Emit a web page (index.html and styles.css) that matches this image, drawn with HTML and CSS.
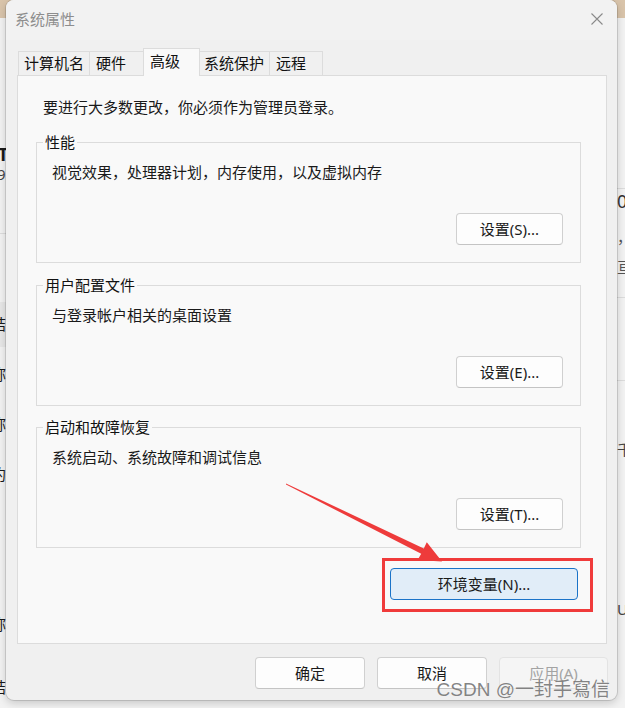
FILE: index.html
```html
<!DOCTYPE html>
<html lang="zh-CN">
<head>
<meta charset="utf-8">
<title>系统属性</title>
<link rel="stylesheet" href="styles.css">
</head>
<body>
<div class="desktop">
  <div class="bgwin">
    <span class="frag f-t">T</span>
    <span class="frag f-9">9</span>
    <span class="hline hl-l1"></span>
    <span class="band-l"></span>
    <span class="frag f-l1">结</span>
    <span class="frag f-l2">称</span>
    <span class="frag f-l3">称</span>
    <span class="frag f-l4">约</span>
    <span class="frag f-l5">称</span>
    <span class="frag f-l6">结</span>
    <span class="hline hl-r1"></span>
    <span class="hline hl-r2"></span>
    <span class="hline hl-r3"></span>
    <span class="frag f-r1">0</span>
    <span class="frag f-r2">，</span>
    <span class="frag f-r3">亘</span>
    <span class="frag f-r4">千</span>
    <span class="frag f-r5">U</span>
  </div>

  <div class="dialog">
    <div class="titlebar">
      <span class="title">系统属性</span>
      <svg class="close" width="12" height="12" viewBox="0 0 12 12"><path d="M0.5 0.5 L11.5 11.5 M11.5 0.5 L0.5 11.5" stroke="#8a8a8a" stroke-width="1.1" fill="none"/></svg>
    </div>
    <div class="tabs">
      <div class="tab tab-1">计算机名</div>
      <div class="tab tab-2">硬件</div>
      <div class="tab tab-active">高级</div>
      <div class="tab tab-4">系统保护</div>
      <div class="tab tab-5">远程</div>
    </div>
    <div class="panel">
      <p class="intro">要进行大多数更改，你必须作为管理员登录。</p>

      <div class="group group-1">
        <span class="legend">性能</span>
        <p class="desc">视觉效果，处理器计划，内存使用，以及虚拟内存</p>
        <div class="row"><button class="btn btn-set">设置(S)...</button></div>
      </div>

      <div class="group group-2">
        <span class="legend">用户配置文件</span>
        <p class="desc">与登录帐户相关的桌面设置</p>
        <div class="row"><button class="btn btn-set">设置(E)...</button></div>
      </div>

      <div class="group group-3">
        <span class="legend">启动和故障恢复</span>
        <p class="desc">系统启动、系统故障和调试信息</p>
        <div class="row"><button class="btn btn-set">设置(T)...</button></div>
      </div>

      <div class="env-row">
        <div class="highlight">
          <button class="btn btn-accent">环境变量(N)...</button>
        </div>
      </div>
    </div>
    <div class="footer">
      <button class="btn btn-foot">确定</button>
      <button class="btn btn-foot">取消</button>
      <button class="btn btn-foot btn-disabled">应用(A)</button>
    </div>
  </div>

  <svg class="arrow" width="625" height="708" viewBox="0 0 625 708">
    <polygon points="286,483.5 423.8,548.4 426.8,542.2 442,561.5 417.6,560 421.2,553.8 286,484.5" fill="#ee3b3b"/>
  </svg>

  <div class="watermark">CSDN @一封手寫信</div>
</div>
</body>
</html>
```

FILE: styles.css
```css
* {
  box-sizing: border-box;
}

html, body {
  margin: 0;
  padding: 0;
}

body {
  font-family: "Noto Sans", "Noto Sans CJK SC", sans-serif;
  font-size: 15px;
  color: #1a1a1a;
  background: #f3f3f3;
}

.desktop {
  position: relative;
  width: 625px;
  height: 708px;
  overflow: hidden;
  background: #d9c4aa;
}

/* background window behind the dialog */
.bgwin {
  position: absolute;
  left: 0;
  top: 18px;
  width: 625px;
  height: 690px;
  background: #f2f2f2;
}

.frag {
  position: absolute;
  font-family: "Noto Sans CJK SC", sans-serif;
  font-size: 15px;
  line-height: 18px;
  color: #1a1a1a;
}

.f-t { left: -2px; top: 127px; font-size: 18px; font-weight: 700; font-family: "Noto Sans", sans-serif; }
.f-9 { left: -3px; top: 147px; font-family: "Noto Sans", sans-serif; color: #444; }
.f-l1 { left: -9px; top: 297px; }
.f-l2 { left: -9px; top: 347px; }
.f-l3 { left: -9px; top: 397px; }
.f-l4 { left: -9px; top: 447px; }
.f-l5 { left: -9px; top: 597px; }
.f-l6 { left: -9px; top: 660px; }

.f-r1 { left: 617px; top: 174px; font-size: 18px; font-family: "Noto Sans", sans-serif; color: #333; }
.f-r2 { left: 617px; top: 210px; color: #555; }
.f-r3 { left: 617px; top: 240px; color: #555; }
.f-r4 { left: 617px; top: 422px; color: #444; }
.f-r5 { left: 617px; top: 582px; color: #444; font-family: "Noto Sans", sans-serif; }

.hline {
  position: absolute;
  height: 1px;
  background: #dcdcdc;
}
.hl-l1 { left: 0; width: 8px; top: 215px; }
.hl-r1 { left: 616px; width: 10px; top: 170px; }
.hl-r2 { left: 616px; width: 10px; top: 279px; }
.hl-r3 { left: 616px; width: 10px; top: 362px; }

.band-l {
  position: absolute;
  left: 0;
  top: 284px;
  width: 8px;
  height: 45px;
  background: #e7e7e7;
}

/* dialog window */
.dialog {
  position: absolute;
  left: 6px;
  top: 0;
  width: 611px;
  height: 700px;
  background: #f0f0f0;
  border-radius: 8px;
  box-shadow: 0 0 0 1px rgba(0, 0, 0, 0.12), 0 3px 8px rgba(0, 0, 0, 0.18);
  display: flex;
  flex-direction: column;
}

.titlebar {
  height: 40px;
  display: flex;
  align-items: center;
  justify-content: space-between;
  padding: 0 14px 2px 9px;
  border-radius: 8px 8px 0 0;
  background: #f2f2f2;
}

.title {
  font-family: "Noto Sans CJK SC", sans-serif;
  font-size: 15px;
  line-height: 20px;
  color: #8d8d8d;
}

.close {
  display: block;
}

/* tabs */
.tabs {
  position: relative;
  z-index: 1;
  height: 36px;
  margin-bottom: -1px;
  padding-left: 12px;
  display: flex;
  align-items: flex-end;
}

.tab {
  height: 24px;
  margin-bottom: 1px;
  margin-right: -1px;
  padding: 1px 0 0 6px;
  border: 1px solid #dcdcdc;
  border-bottom: none;
  background: #f0f0f0;
  font-family: "Noto Sans CJK SC", sans-serif;
  font-size: 15px;
  line-height: 20px;
  color: #111;
  white-space: nowrap;
}

.tab-1 { width: 72px; padding-left: 5px; }
.tab-2 { width: 55px; }
.tab-active {
  width: 57px;
  height: 28px;
  margin-bottom: 0;
  padding-top: 2px;
  background: #f9f9f9;
  position: relative;
  z-index: 2;
}
.tab-4 { width: 71px; padding-left: 4px; }
.tab-5 { width: 54px; }

/* tab panel */
.panel {
  height: 569px;
  margin: 0 10px 0 11px;
  padding-top: 21px;
  background: #f9f9f9;
  border: 1px solid #dcdcdc;
}

.intro {
  margin: 0;
  padding-left: 25px;
  font-family: "Noto Sans CJK SC", sans-serif;
  line-height: 20px;
}

.group {
  position: relative;
  margin: 25px 25px 0 18px;
  padding: 19px 17px 17px 15px;
  border: 1px solid #dcdcdc;
}

.group-2 { margin-top: 22px; }
.group-3 { margin-top: 21px; }

.legend {
  position: absolute;
  left: 6px;
  top: -11px;
  padding: 0 2px;
  background: #f9f9f9;
  font-family: "Noto Sans CJK SC", sans-serif;
  line-height: 20px;
  color: #111;
}

.desc {
  margin: 0;
  font-family: "Noto Sans CJK SC", sans-serif;
  line-height: 20px;
}

.row {
  margin-top: 31px;
  display: flex;
  justify-content: flex-end;
}

.btn {
  height: 32px;
  padding: 0;
  border: 1px solid #d0d0d0;
  border-bottom-color: #c4c4c4;
  border-radius: 4px;
  background: #fdfdfd;
  font-family: "Noto Sans", "Noto Sans CJK SC", sans-serif;
  font-size: 15px;
  line-height: 30px;
  color: #1a1a1a;
  text-align: center;
}

.btn-set { width: 107px; }

.env-row {
  margin-top: 10px;
  padding-right: 13px;
  display: flex;
  justify-content: flex-end;
}

.highlight {
  padding: 7px 12px 9px 5px;
  border: 3px solid #f03b3b;
}

.btn-accent {
  width: 188px;
  display: block;
  background: #e1edf8;
  border: 1px solid #1a73c8;
}

.footer {
  padding: 13px 9px 0 0;
  display: flex;
  justify-content: flex-end;
  gap: 12px;
}

.btn-foot { width: 110px; }
.btn-disabled {
  width: 109px;
  background: #f5f5f5;
  border-color: #e3e3e3;
  color: #a3a3a3;
}

/* annotation overlays */
.arrow {
  position: absolute;
  left: 0;
  top: 0;
  pointer-events: none;
}

.watermark {
  position: absolute;
  right: 15px;
  top: 679px;
  font-family: "Liberation Sans", "Noto Sans CJK TC", sans-serif;
  font-size: 19px;
  line-height: 22px;
  color: rgba(110, 110, 110, 0.85);
  white-space: nowrap;
  text-shadow: 0 0 1px rgba(255, 255, 255, 0.6);
}
```
